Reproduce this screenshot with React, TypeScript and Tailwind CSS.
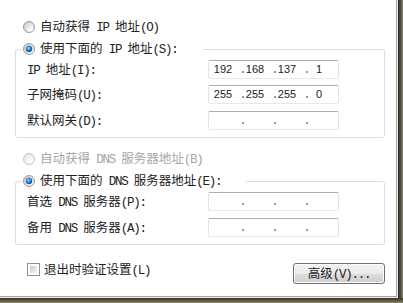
import React from "react";

function T({ s, className = "" }: { s: string; className?: string }) {
  const parts = s.match(/[\u0000-\u007f]+|[^\u0000-\u007f]+/g) || [];
  return (
    <span className={"whitespace-pre " + className}>
      {parts.map((p, i) =>
        /^[\u0000-\u007f]/.test(p) ? (
          <span key={i} className="font-['Liberation_Mono',monospace] tracking-[-1.25px]">
            {p}
          </span>
        ) : (
          <span key={i}>{p}</span>
        )
      )}
    </span>
  );
}

function Radio({ checked, disabled }: { checked?: boolean; disabled?: boolean }) {
  const id = checked ? "rc" : disabled ? "rd" : "ru";
  return (
    <svg width="12" height="12" viewBox="0 0 12 12" className="shrink-0">
      <defs>
        <radialGradient id={id + "f"} cx="0.7" cy="0.75" r="0.8">
          <stop offset="0" stopColor="#ffffff" />
          <stop offset="1" stopColor={disabled ? "#e6e6e6" : "#cfcfcf"} />
        </radialGradient>
        <radialGradient id={id + "d"} cx="0.4" cy="0.35" r="0.7">
          <stop offset="0" stopColor="#9fd9ff" />
          <stop offset="0.5" stopColor="#2a8ad6" />
          <stop offset="1" stopColor="#0d3f8a" />
        </radialGradient>
      </defs>
      <circle cx="6" cy="6" r="5.5" fill={`url(#${id}f)`} stroke={disabled ? "#c6c6c6" : "#9a9a9a"} strokeWidth="1" />
      {checked && <circle cx="6" cy="6" r="3" fill={`url(#${id}d)`} stroke="#1b4f8f" strokeWidth="0.5" />}
    </svg>
  );
}

function Field({ value }: { value?: string[] }) {
  const v = value || ["", "", "", ""];
  return (
    <div className="w-[131px] h-[19px] shrink-0 rounded-[2px] border border-[#e2e3ea] border-t-[#abadb3] border-b-[#e3e9ef] bg-white flex items-center pl-[4px] font-['Liberation_Sans',sans-serif] text-[11px] text-[#222]">
      {v.map((n, i) => (
        <React.Fragment key={i}>
          <span className="w-[28px] pr-[8px] text-center leading-[17px]">{n}</span>
          {i < 3 && (
            <span className="w-[4px] h-[17px] flex items-end justify-center pb-[5px]">
              <span className="w-[2px] h-[2px] bg-[#999999]" />
            </span>
          )}
        </React.Fragment>
      ))}
    </div>
  );
}

function Row({ label, value, className = "" }: { label: string; value?: string[]; className?: string }) {
  return (
    <div className={"flex items-center h-[19px] " + className}>
      <div className="w-[181px] shrink-0 leading-[19px]">
        <T s={label} />
      </div>
      <Field value={value} />
    </div>
  );
}

function Group({ legend, children, className = "" }: { legend: string; children: React.ReactNode; className?: string }) {
  return (
    <div className={"relative rounded-[3px] border border-[#d5dfe5] pl-[11px] pt-[10px] pb-[7px] " + className}>
      <div className="absolute left-[6px] top-[-10px] h-[18px] bg-white pl-[1px] pr-[25px] flex items-center gap-[5px]">
        <Radio checked />
        <T s={legend} className="leading-[18px]" />
      </div>
      {children}
    </div>
  );
}

export default function App() {
  return (
    <div className="w-[403px] h-[303px] flex flex-col font-['Noto_Sans_CJK_SC',sans-serif] text-[12.5px] text-[#222] antialiased">
      <div className="flex h-[298px]">
        <div className="w-[398px] h-[298px] bg-[#ececec]">
          <div className="w-[397px] h-[297px] bg-white border-r border-b border-[#a3a3a3] pl-[15px] pr-[11px] pt-[18px]">
            <div className="h-[18px] flex items-center gap-[5px] pl-[8px]">
              <Radio />
              <T s="自动获得 IP 地址(O)" className="leading-[18px]" />
            </div>
            <Group legend="使用下面的 IP 地址(S):" className="mt-[13px]">
              <Row label="IP 地址(I):" value={["192", "168", "137", "1"]} />
              <Row label="子网掩码(U):" value={["255", "255", "255", "0"]} className="mt-[6px]" />
              <Row label="默认网关(D):" className="mt-[7px]" />
            </Group>
            <div className="h-[18px] mt-[12px] flex items-center gap-[5px] pl-[8px]">
              <Radio disabled />
              <T s="自动获得 DNS 服务器地址(B)" className="leading-[18px] text-[#a6a6a6]" />
            </div>
            <Group legend="使用下面的 DNS 服务器地址(E):" className="mt-[13px]">
              <Row label="首选 DNS 服务器(P):" />
              <Row label="备用 DNS 服务器(A):" className="mt-[7px]" />
            </Group>
            <div className="mt-[18px] flex justify-between items-start">
              <div className="h-[13px] flex items-center gap-[4px] pl-[12px]">
                <div className="w-[13px] h-[13px] border border-[#8f8f8f] bg-white p-[2px] shrink-0">
                  <div className="w-full h-full bg-gradient-to-br from-[#cbcbcb] to-[#f4f4f4]" />
                </div>
                <T s="退出时验证设置(L)" className="leading-[13px]" />
              </div>
              <button className="w-[92px] h-[21px] rounded-[3px] border border-[#707070] bg-[linear-gradient(to_bottom,#f2f2f2_0%,#ebebeb_50%,#dddddd_50%,#cfcfcf_100%)] flex items-center justify-center shadow-[inset_0_0_0_1px_#fcfcfc]">
                <T s="高级(V)..." className="leading-[19px]" />
              </button>
            </div>
          </div>
        </div>
        <div className="w-[5px] h-[298px] bg-[linear-gradient(to_right,#2b2a22,#4c4a3e,#8d8b7e)]" />
      </div>
      <div className="h-[5px] w-[403px] bg-[linear-gradient(to_bottom,#3a3728,#5a5642,#8e8a76)]" />
    </div>
  );
}
